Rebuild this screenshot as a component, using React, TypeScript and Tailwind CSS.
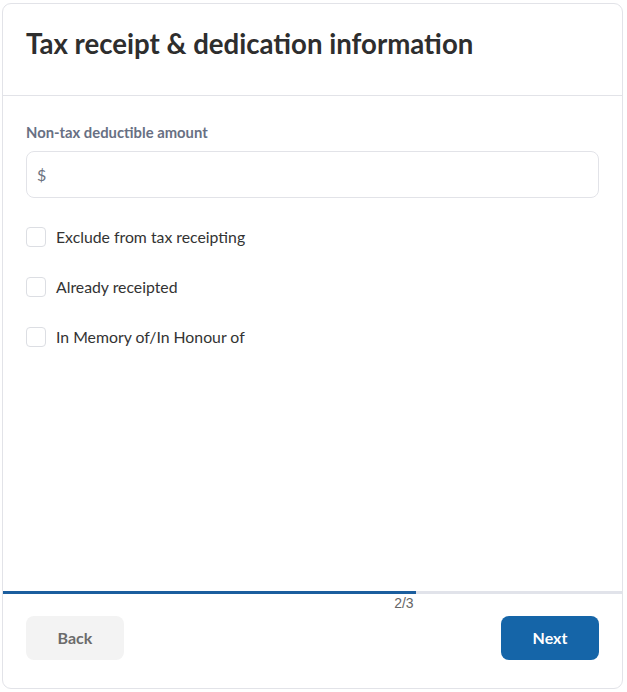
import React from 'react';

const options = ['Exclude from tax receipting', 'Already receipted', 'In Memory of/In Honour of'];

export default function App() {
  return (
    <div className="min-h-screen bg-white pl-[2px] pt-[3px] font-['Lato',sans-serif]">
      <div className="w-[621px] h-[686px] border border-[#e2e3e8] rounded-[9px] flex flex-col overflow-hidden">
        <div className="h-[92px] border-b border-[#e2e3e8] px-[23px] pt-[23px] shrink-0">
          <h1 className="text-[27.6px] leading-[34px] font-bold text-[#2e2e2e]">
            Tax receipt &amp; dedication information
          </h1>
        </div>

        <div className="flex-1 px-[23px] pt-[28px]">
          <label className="block text-[14.8px] leading-[17px] font-bold text-[#687083]">
            Non-tax deductible amount
          </label>
          <div className="mt-[10px] h-[47px] border border-[#e2e3e8] rounded-[8px] flex items-center px-[10px] text-[16px] text-[#6b7280]">
            $
          </div>

          <div className="mt-[29px] flex flex-col gap-[30px]">
            {options.map((opt) => (
              <label key={opt} className="flex items-center gap-[10px] h-[20px]">
                <span className="w-[20px] h-[20px] border border-[#dcdee3] rounded-[4px] bg-white shrink-0" />
                <span className="text-[15.8px] text-[#333333]">{opt}</span>
              </label>
            ))}
          </div>
        </div>

        <div className="shrink-0">
          <div className="h-[3px] bg-[#e1e3ea]">
            <div className="h-full w-2/3 bg-[#1b5e9e]" />
          </div>
          <div className="w-2/3 text-right text-[14px] leading-[16px] font-['Liberation_Sans',sans-serif] text-[#666666] mt-[1px] pr-[2px]">
            2/3
          </div>
          <div className="flex justify-between px-[23px] mt-[5px] pb-[28px]">
            <button className="w-[98px] h-[44px] rounded-[8px] bg-[#f3f3f3] text-[16px] font-bold text-[#6b6b6b]">
              Back
            </button>
            <button className="w-[98px] h-[44px] rounded-[8px] bg-[#1565a8] text-[16px] font-bold text-white">
              Next
            </button>
          </div>
        </div>
      </div>
    </div>
  );
}
